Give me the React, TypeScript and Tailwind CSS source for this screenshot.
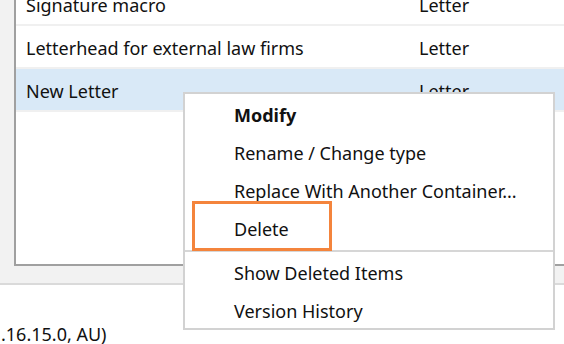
const rows = [
  { name: "Signature macro", type: "Letter", selected: false },
  { name: "Letterhead for external law firms", type: "Letter", selected: false },
  { name: "New Letter", type: "Letter", selected: true },
];

const menuTop = ["Modify", "Rename / Change type", "Replace With Another Container...", "Delete"];
const menuBottom = ["Show Deleted Items", "Version History"];

export default function App() {
  return (
    <div
      className="relative w-[564px] h-[344px] overflow-hidden bg-white text-[#111] text-[18px]"
      style={{ fontFamily: '"Noto Sans", "Open Sans", sans-serif' }}
    >
      {/* grey panel holding the list */}
      <div className="h-[285px] bg-[#f2f2f2] pl-[14px] border-b-2 border-[#dadada]">
        <div className="h-[266px] w-[600px] bg-white border-l-2 border-b-2 border-[#a0a0a0] overflow-hidden">
          <div className="mt-[-17px]">
            {rows.map((r) => (
              <div
                key={r.name}
                className={`flex items-center h-[43px] pt-[3px] border-b-2 border-[#f0f0f0] ${
                  r.selected ? "bg-[#d9e9f7]" : "bg-white"
                }`}
              >
                <div className="w-[403px] pl-[10px]">{r.name}</div>
                <div>{r.type}</div>
              </div>
            ))}
          </div>
        </div>
      </div>

      {/* status text */}
      <div className="pt-[36px] pl-[1px]">.16.15.0, AU)</div>

      {/* context menu */}
      <div className="absolute left-[183px] top-[92px] w-[372px] h-[238px] bg-white border-2 border-[#d2d2d2] pt-[2px]">
        {menuTop.map((m, i) => (
          <div key={m} className={`h-[38px] flex items-center pl-[49px] ${i === 0 ? "font-bold" : ""}`}>
            {m}
          </div>
        ))}
        <div className="h-[2px] bg-[#d6d6d6] mt-[2px] mb-[2px]" />
        {menuBottom.map((m) => (
          <div key={m} className="h-[38px] flex items-center pl-[49px]">
            {m}
          </div>
        ))}
      </div>

      {/* highlight box */}
      <div className="absolute left-[192px] top-[201px] w-[140px] h-[50px] border-[3px] border-[#f4843c]" />
    </div>
  );
}
